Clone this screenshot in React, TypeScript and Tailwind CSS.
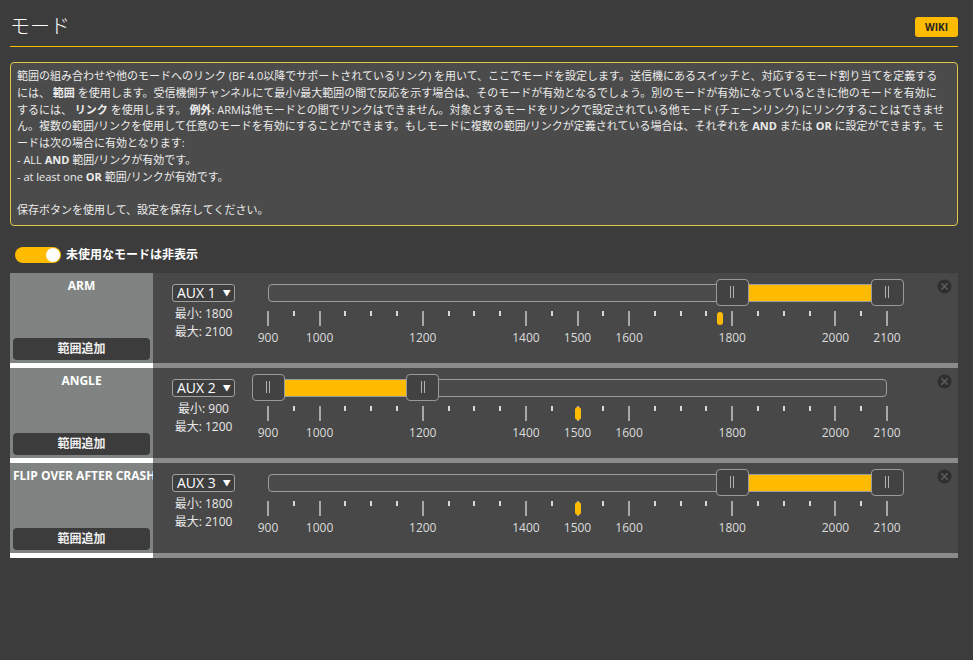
import React from "react";

const MIN = 900;
const MAX = 2100;
const W = 619;
const pos = (v: number) => ((v - MIN) / (MAX - MIN)) * W;
const majors = [900, 1000, 1200, 1400, 1500, 1600, 1800, 2000, 2100];
const ticks = Array.from({ length: 25 }, (_, i) => 900 + i * 50);

type Mode = { name: string; aux: string; min: number; max: number; value: number };
const modes: Mode[] = [
  { name: "ARM", aux: "AUX 1", min: 1800, max: 2100, value: 1776 },
  { name: "ANGLE", aux: "AUX 2", min: 900, max: 1200, value: 1500 },
  { name: "FLIP OVER AFTER CRASH", aux: "AUX 3", min: 1800, max: 2100, value: 1500 },
];

const FONT = { fontFamily: '"Open Sans", "Noto Sans CJK JP", sans-serif' };

function Handle({ x }: { x: number }) {
  return (
    <div
      className="absolute top-[6px] flex h-[27px] w-[33px] items-center justify-center gap-[2px] rounded-[4px] border border-[#9a9a9a] bg-[#424242]"
      style={{ left: x - 16.5 }}
    >
      <div className="h-[12px] w-px bg-[#b0b0b0]" />
      <div className="h-[12px] w-px bg-[#b0b0b0]" />
    </div>
  );
}

function Slider({ min, max, value }: { min: number; max: number; value: number }) {
  const a = pos(min);
  const b = pos(max);
  return (
    <div className="relative h-[90px] w-[619px] shrink-0">
      <div className="absolute left-0 right-0 top-[11px] h-[18px] rounded-[4px] border border-[#9c9c9c] bg-[#4b4b4b]" />
      <div className="absolute top-[12px] h-[16px] bg-[#ffbb00]" style={{ left: a, width: b - a }} />
      {ticks.map((t) => {
        const major = majors.includes(t);
        return (
          <div
            key={t}
            className={
              major
                ? "absolute top-[38px] h-[15px] w-[2px] bg-[#a8a8a8]"
                : "absolute top-[38px] h-[5px] w-[2px] bg-[#d8d8d8]"
            }
            style={{ left: pos(t) - 1 }}
          />
        );
      })}
      {majors.map((t) => (
        <div
          key={t}
          className="absolute top-[57px] w-[40px] text-center text-[12px] leading-[16px] text-[#dcdcdc]"
          style={{ left: pos(t) - 20 }}
        >
          {t}
        </div>
      ))}
      <div
        className="absolute top-[39px] h-[13px] w-[6px] rounded-full bg-[#ffbb00]"
        style={{ left: pos(value) - 3 }}
      />
      <Handle x={a} />
      <Handle x={b} />
    </div>
  );
}

function CloseIcon() {
  return (
    <svg width="15" height="15" viewBox="0 0 15 15" className="absolute right-[6px] top-[6px]">
      <circle cx="7.5" cy="7.5" r="7" fill="#2f2f2f" />
      <path d="M4.8 4.8 L10.2 10.2 M10.2 4.8 L4.8 10.2" stroke="#5c5c5c" strokeWidth="1.6" strokeLinecap="round" />
    </svg>
  );
}

function ModeRow({ m }: { m: Mode }) {
  return (
    <div className="flex h-[95px]">
      <div className="flex w-[143px] shrink-0 flex-col border-b-[5px] border-white bg-[#7f8482] px-[3px] pb-[3px]">
        <div className="pt-[5px] text-center text-[12px] font-bold leading-[16px] whitespace-nowrap text-white">
          {m.name}
        </div>
        <div className="mt-auto flex h-[22px] items-center justify-center rounded-[4px] bg-[#3c3c3c] text-[12px] font-bold text-[#f0f0f0]">
          範囲追加
        </div>
      </div>
      <div className="relative flex flex-1 border-b-[5px] border-[#8b8b8b] bg-[#484848] pl-[19px]">
        <div className="flex w-[63px] shrink-0 flex-col items-center pt-[11px]">
          <div className="flex h-[18px] w-[63px] items-center rounded-[3px] border border-[#a0a0a0] bg-[#3e3e3e] pl-[4px] text-[14px] leading-none text-white">
            <span>{m.aux}</span>
            <span className="ml-[7px] text-[8px]">▼</span>
          </div>
          <div className="mt-[3px] text-[12px] leading-[18px] whitespace-nowrap text-[#e8e8e8]">最小: {m.min}</div>
          <div className="text-[12px] leading-[18px] whitespace-nowrap text-[#e8e8e8]">最大: {m.max}</div>
        </div>
        <div className="ml-[33px]">
          <Slider min={m.min} max={m.max} value={m.value} />
        </div>
        <CloseIcon />
      </div>
    </div>
  );
}

export default function App() {
  return (
    <div className="min-h-[660px] w-full bg-[#3b3c3b] pl-[10px] pr-[15px]" style={FONT}>
      <div className="flex h-[47px] items-center justify-between border-b border-[#ffbb00] pt-[8px]">
        <div className="text-[20px] font-light leading-none text-white">モード</div>
        <div className="flex h-[20px] w-[43px] items-center justify-center rounded-[3px] bg-[#ffbb00] text-[10px] font-bold text-[#222]">
          WIKI
        </div>
      </div>
      <div className="mt-[15px] rounded-[4px] border border-[#e3c64a] bg-[#4b4b4b] pb-[6px] pl-[6px] pr-[6px] pt-[5px] text-[11px] leading-[16.75px] whitespace-nowrap text-[#ececec]">
        範囲の組み合わせや他のモードへのリンク (BF 4.0以降でサポートされているリンク) を用いて、ここでモードを設定します。送信機にあるスイッチと、対応するモード割り当てを定義する
        <br />
        には、 <b>範囲</b> を使用します。受信機側チャンネルにて最小/最大範囲の間で反応を示す場合は、そのモードが有効となるでしょう。別のモードが有効になっているときに他のモードを有効に
        <br />
        するには、 <b>リンク</b> を使用します。 <b>例外</b>: ARMは他モードとの間でリンクはできません。対象とするモードをリンクで設定されている他モード (チェーンリンク) にリンクすることはできませ
        <br />
        ん。複数の範囲/リンクを使用して任意のモードを有効にすることができます。もしモードに複数の範囲/リンクが定義されている場合は、それぞれを <b>AND</b> または <b>OR</b> に設定ができます。モ
        <br />
        ードは次の場合に有効となります:
        <br />- ALL <b>AND</b> 範囲/リンクが有効です。
        <br />- at least one <b>OR</b> 範囲/リンクが有効です。
        <br />
        &nbsp;
        <br />
        保存ボタンを使用して、設定を保存してください。
      </div>
      <div className="ml-[5px] mt-[21px] flex h-[16px] items-center gap-[5px]">
        <div className="relative h-[16px] w-[46px] rounded-full bg-[#ffbb00]">
          <div className="absolute right-[1px] top-[1px] h-[14px] w-[14px] rounded-full bg-white" />
        </div>
        <div className="text-[12px] font-bold text-white">未使用なモードは非表示</div>
      </div>
      <div className="mt-[10px] flex flex-col">
        {modes.map((m) => (
          <ModeRow key={m.name} m={m} />
        ))}
      </div>
    </div>
  );
}
